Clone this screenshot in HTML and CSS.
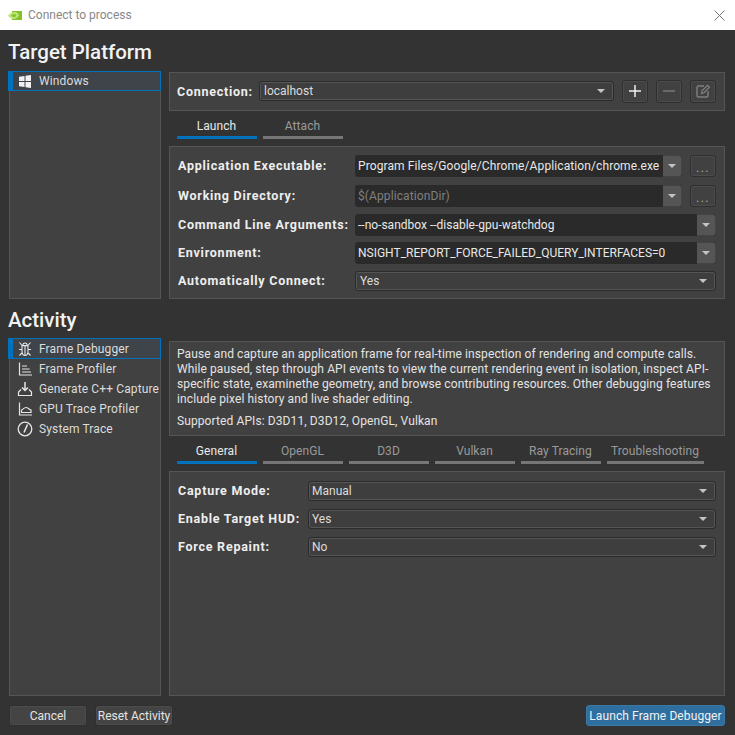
FILE: index.html
```html
<!DOCTYPE html>
<html lang="en">
<head>
<meta charset="utf-8">
<title>Connect to process</title>
<link rel="stylesheet" href="styles.css">
</head>
<body>
<div class="app">
  <header class="titlebar">
    <svg class="nv-logo" width="14" height="9" viewBox="0 0 14 9"><rect x="4" y="0" width="10" height="9" fill="#84c225"/><path d="M0 4.500C2 2 4.500 1 7 1 9 1 10.500 3 11 4.500 9.500 6.500 7.500 8 5.500 8 3.500 8 1.500 6.500 0 4.500Z" fill="#bfe57e"/><path d="M3 4.500C4 3.500 5.500 3 6.500 3 7.500 3 8.300 3.800 8.300 4.500 8 5.500 6.800 6 6 6 4.800 6 3.800 5.300 3 4.500Z" fill="#84c225"/></svg>
    <span class="titlebar-text">Connect to process</span>
    <svg class="close" width="11" height="11" viewBox="0 0 11 11"><path d="M.5.500l10 10M10.500.500l-10 10" stroke="#777" stroke-width="1" fill="none"/></svg>
  </header>
  <main class="content">
    <h2 class="heading heading-first">Target Platform</h2>
    <section class="split split-top">
      <ul class="side">
        <li class="side-item selected">
          <svg class="ico" width="16" height="16" viewBox="0 0 16 16"><path d="M2 3.800 7.500 3V8H2ZM8.500 2.800 14 2V8H8.500ZM2 9H7.500V14L2 13.200ZM8.500 9H14V15L8.500 14.200Z" fill="#f2f2f2"/></svg>
          <span>Windows</span>
        </li>
      </ul>
      <div class="col col-top">
        <div class="panel connection">
          <span class="label conn-label">Connection:</span>
          <div class="combo conn-combo"><span class="combo-text">localhost</span><i class="arrow"></i></div>
          <button class="btn icon-btn"><svg width="14" height="14" viewBox="0 0 14 14"><path d="M7 1V13M1 7H13" stroke="#eee" stroke-width="1.500" fill="none"/></svg></button>
          <button class="btn icon-btn"><svg width="14" height="14" viewBox="0 0 14 14"><path d="M1 7H13" stroke="#777" stroke-width="1.500" fill="none"/></svg></button>
          <button class="btn icon-btn"><svg width="16" height="16" viewBox="0 0 16 16"><path d="M9 3H3.500C2.700 3 2 3.700 2 4.500V12.500C2 13.300 2.700 14 3.500 14H11.500C12.300 14 13 13.300 13 12.500V8" stroke="#808080" stroke-width="1.400" fill="none"/><path d="M6.500 10.500 7 7.800 12.500 2.300 14.500 4 9 9.700Z" stroke="#808080" stroke-width="1.200" fill="none"/></svg></button>
        </div>
        <nav class="tabs tabs-launch">
          <span class="tab active">Launch</span>
          <span class="tab">Attach</span>
        </nav>
        <div class="panel form form-launch">
          <span class="label">Application Executable:</span>
          <div class="field-group">
            <div class="edit-combo"><span class="edit-text spaced">Program Files/Google/Chrome/Application/chrome.exe</span><i class="drop"><i class="arrow"></i></i></div>
            <button class="btn dots">...</button>
          </div>
          <span class="label">Working Directory:</span>
          <div class="field-group">
            <div class="edit-combo disabled"><span class="edit-text spaced">$(ApplicationDir)</span><i class="drop"><i class="arrow"></i></i></div>
            <button class="btn dots">...</button>
          </div>
          <span class="label">Command Line Arguments:</span>
          <div class="edit-combo"><span class="edit-text">--no-sandbox --disable-gpu-watchdog</span><i class="drop"><i class="arrow"></i></i></div>
          <span class="label">Environment:</span>
          <div class="edit-combo"><span class="edit-text">NSIGHT_REPORT_FORCE_FAILED_QUERY_INTERFACES=0</span><i class="drop"><i class="arrow"></i></i></div>
          <span class="label">Automatically Connect:</span>
          <div class="combo"><span class="combo-text">Yes</span><i class="arrow"></i></div>
        </div>
      </div>
    </section>
    <h2 class="heading heading-second">Activity</h2>
    <section class="split split-bottom">
      <ul class="side">
        <li class="side-item selected">
          <svg class="ico" width="16" height="16" viewBox="0 0 16 16" fill="none" stroke="#e6e6e6" stroke-width="1.100"><path d="M5.800 4.500C5.800 3 6.700 2 8 2S10.200 3 10.200 4.500ZM5 4.800H11V10C11 12.500 9.800 14.500 8 14.500S5 12.500 5 10ZM8 5V14.500M2.500 1.500 5 4.500M13.500 1.500 11 4.500M2 8.500H5M14 8.500H11M2.500 14.500 5.300 11.500M13.500 14.500 10.700 11.500"/></svg>
          <span>Frame Debugger</span>
        </li>
        <li class="side-item">
          <svg class="ico" width="16" height="16" viewBox="0 0 16 16" fill="none" stroke="#e6e6e6" stroke-width="1.200"><path d="M2.500 1.500V14H15M5 5H10M5 8H12.500M5 11H14"/></svg>
          <span>Frame Profiler</span>
        </li>
        <li class="side-item">
          <svg class="ico" width="16" height="16" viewBox="0 0 16 16" fill="none" stroke="#e6e6e6" stroke-width="1.200"><path d="M8 1V9M5 6.500 8 9.500 11 6.500" stroke-width="1.500"/><path d="M4 8.500 1.500 11V14.500H14.500V11L12 8.500"/></svg>
          <span>Generate C++ Capture</span>
        </li>
        <li class="side-item">
          <svg class="ico" width="16" height="16" viewBox="0 0 16 16" fill="none" stroke="#e6e6e6" stroke-width="1.200"><path d="M2.500 1.500V14H15"/><path d="M4.500 11.500V9C6 8.500 7 6.500 9 6.500S12 8.500 14 9V11.500Z"/></svg>
          <span>GPU Trace Profiler</span>
        </li>
        <li class="side-item">
          <svg class="ico" width="16" height="16" viewBox="0 0 16 16" fill="none" stroke="#e6e6e6" stroke-width="1.300"><circle cx="8" cy="8" r="6.800"/><path d="M10.500 3.500 7 11.500" stroke-width="1.600"/></svg>
          <span>System Trace</span>
        </li>
      </ul>
      <div class="col col-bottom">
        <div class="panel description">
          <p class="desc-text">Pause and capture an application frame for real-time inspection of rendering and compute calls. While paused, step through API events to view the current rendering event in isolation, inspect API-specific state, examinethe geometry, and browse contributing resources. Other debugging features include pixel history and live shader editing.</p>
          <p class="desc-apis">Supported APIs: D3D11, D3D12, OpenGL, Vulkan</p>
        </div>
        <nav class="tabs tabs-activity">
          <span class="tab active">General</span>
          <span class="tab">OpenGL</span>
          <span class="tab">D3D</span>
          <span class="tab">Vulkan</span>
          <span class="tab">Ray Tracing</span>
          <span class="tab tab-wide">Troubleshooting</span>
        </nav>
        <div class="panel form form-activity">
          <span class="label">Capture Mode:</span>
          <div class="combo"><span class="combo-text">Manual</span><i class="arrow"></i></div>
          <span class="label">Enable Target HUD:</span>
          <div class="combo"><span class="combo-text">Yes</span><i class="arrow"></i></div>
          <span class="label">Force Repaint:</span>
          <div class="combo"><span class="combo-text">No</span><i class="arrow"></i></div>
        </div>
      </div>
    </section>
    <footer class="footer">
      <button class="btn foot-btn">Cancel</button>
      <button class="btn foot-btn">Reset Activity</button>
      <button class="btn primary">Launch Frame Debugger</button>
    </footer>
  </main>
</div>
</body>
</html>
```
FILE: styles.css
```css
* { box-sizing: border-box; }
html, body { margin: 0; padding: 0; }
body { font-family: Roboto, "Liberation Sans", sans-serif; font-size: 12px; color: #e4e4e4; background: #333; }
.app { width: 735px; height: 735px; display: flex; flex-direction: column; overflow: hidden; }

.titlebar { height: 30px; flex: none; background: #fff; display: flex; align-items: center; padding: 0 10px 0 8px; }
.nv-logo { margin-right: 6px; }
.titlebar-text { color: #888; font-size: 12px; flex: 1; }

.content { flex: 1; display: flex; flex-direction: column; padding: 0 10px 9px 9px; background: #333; }
.heading { margin: 0 0 0 -1px; color: #f2f2f2; font-size: 20.500px; font-weight: 500; display: flex; align-items: center; }
.heading-first { height: 41px; padding-top: 3px; }
.heading-second { height: 39px; padding-top: 3px; }

.split { display: flex; gap: 8px; }
.split-top { height: 228px; }
.split-bottom { height: 358px; }

.side { width: 152px; flex: none; margin: 0; padding: 0; list-style: none; background: #414141; border: 1px solid #555; }
.side-item { height: 20px; display: flex; align-items: center; padding-left: 7px; gap: 6px; color: #dcdcdc; letter-spacing: .13px; white-space: nowrap; }
.side-item.selected { height: 21px; margin: -1px -1px 0 -2px; background: #3f444a; border: 1px solid #0071bc; border-left: 5px solid #0071bc; padding-left: 4px; }
.split-top .side-item.selected { height: 20px; }
.ico { flex: none; }

.col { flex: 1; min-width: 0; display: flex; flex-direction: column; }
.col-top { padding-top: 1px; }
.col-bottom { padding-top: 3px; }

.panel { background: #414141; border: 1px solid #555; }
.connection { height: 39px; display: flex; align-items: center; padding: 0 8px 1px 7px; gap: 8px; }
.conn-label { width: 75px; }
.combo.conn-combo { flex: 1; margin-left: -1px; padding-left: 4px; }

.label { font-weight: 700; font-size: 12.500px; letter-spacing: .75px; color: #eee; white-space: nowrap; }

.combo { height: 20px; background: #3e3e3e; border: 1px solid #2b2b2b; border-radius: 3px; box-shadow: inset 0 0 0 1px #555; display: flex; align-items: center; padding: 0 8px 0 3px; color: #dcdcdc; }
.form-launch .combo { padding-left: 4px; }
.combo-text { flex: 1; }
.arrow { display: block; width: 0; height: 0; border-left: 4px solid transparent; border-right: 4px solid transparent; border-top: 4px solid #c4c4c4; }

.edit-combo { flex: 1; min-width: 0; height: 22px; background: #2a2a2a; border-radius: 3px; display: flex; align-items: center; color: #e8e8e8; overflow: hidden; }
.edit-text { flex: 1; white-space: nowrap; padding-left: 3px; overflow: hidden; }
.spaced { letter-spacing: .1px; }
.edit-combo.disabled { color: #808080; }
.drop { flex: none; width: 19px; height: 22px; background: #555; border: 1px solid #444; border-left: 0; border-radius: 0 3px 3px 0; display: flex; align-items: center; justify-content: center; }

.btn { font-family: inherit; font-size: 12px; color: #e4e4e4; background: #414141; border: 1px solid #2f2f2f; border-radius: 3px; padding: 0; box-shadow: inset 0 0 0 1px #4c4c4c; }
.icon-btn { width: 26px; height: 23px; flex: none; display: flex; align-items: center; justify-content: center; }
.dots { width: 26px; height: 22px; flex: none; color: #aaa; letter-spacing: 1.500px; padding-top: 3px; }
.field-group { display: flex; gap: 8px; }

.tabs { display: flex; gap: 6px; padding-left: 8px; }
.tab { width: 80px; height: 21px; flex: none; text-align: center; color: #9a9a9a; border-bottom: 3px solid #767676; line-height: 16px; letter-spacing: .08px; padding-right: 1px; }
.tab.active { color: #e8e8e8; border-bottom-color: #0071bc; }
.tab-wide { width: 97px; }
.tabs-launch { margin-top: 7px; }
.tabs-activity { margin-top: 5px; height: 23px; align-items: flex-end; }

.form { display: grid; align-items: start; padding: 8px 8px 0; }
.form-launch { margin-top: 7px; flex: 1; grid-template-columns: 177px 1fr; grid-template-rows: 30px 29px 28px 29px 20px; }
.form-launch .label { line-height: 22px; }
.form-launch .label:nth-last-child(2) { line-height: 20px; }
.form-activity { margin-top: 7px; flex: 1; grid-template-columns: 130px 1fr; grid-template-rows: 28px 28px 20px; padding-top: 9px; }
.form-activity .label { line-height: 20px; }

.description { height: 95px; padding: 5px 0 0 7px; letter-spacing: .1px; }
.desc-text { margin: 0; line-height: 15px; }
.desc-apis { margin: 7px 0 0; line-height: 15px; }

.footer { margin-top: 9px; height: 21px; display: flex; gap: 8px; }
.foot-btn { width: 78px; height: 21px; background: #444; }
.primary { margin-left: auto; width: 139px; height: 21px; background: #2f6f9f; border: 1px solid #3a78a6; box-shadow: none; color: #f2f2f2; letter-spacing: .1px; }
```
